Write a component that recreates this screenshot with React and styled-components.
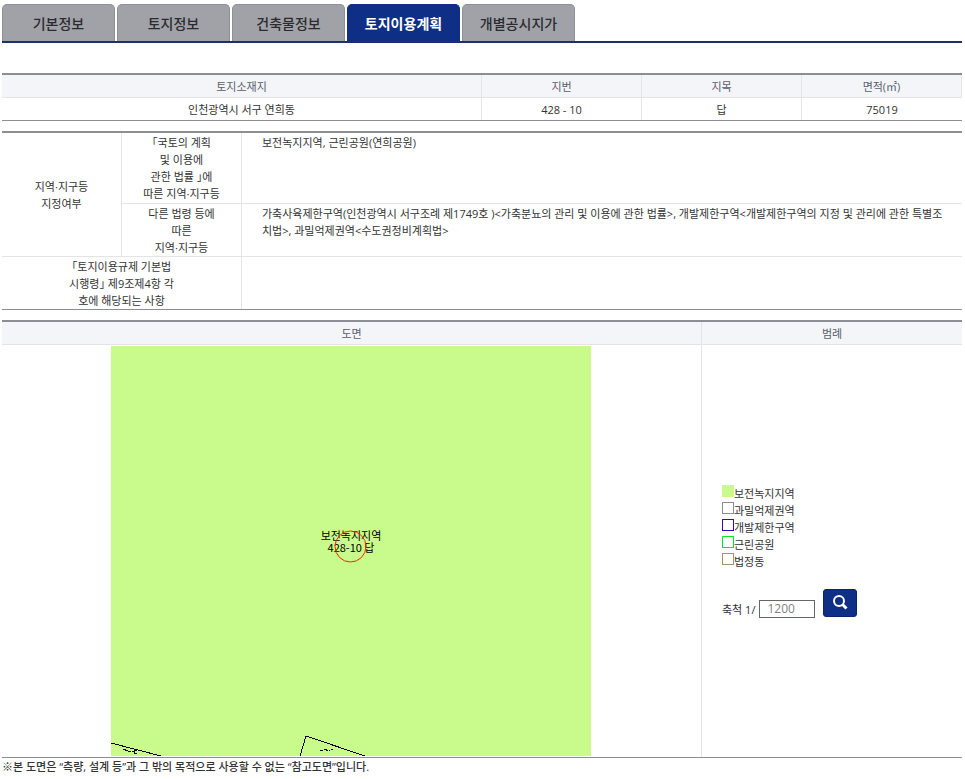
import React, { useState } from "react";
import styled, { createGlobalStyle } from "styled-components";

const Colors = {
  navy: "#0f2e86",
  line: "#1d2f6f",
  tab: "#a0a2a8",
  tabBorder: "#8e9096",
  strong: "#8b8e96",
  light: "#e2e4e8",
  head: "#f3f5f8",
  headText: "#5a5e6e",
  text: "#333333",
  map: "#c8fb8c",
};

const GlobalStyle = createGlobalStyle`
  * {
    box-sizing: border-box;
  }
  body {
    margin: 0;
    background: #ffffff;
    color: ${Colors.text};
    font-family: "Open Sans", "Noto Sans CJK KR", sans-serif;
    font-size: 11px;
    line-height: 17px;
  }
`;

const Page = styled.div`
  padding: 4px 3px 0 2px;
`;

const TabList = styled.nav`
  display: flex;
  gap: 2px;
  margin-bottom: 30px;
  border-bottom: 2px solid ${Colors.line};
`;

const Tab = styled.button`
  width: 113px;
  height: 37px;
  padding: 0;
  border: 1px solid ${(props) => (props.$active ? Colors.navy : Colors.tabBorder)};
  border-bottom: 0;
  border-radius: 5px 5px 0 0;
  background: ${(props) => (props.$active ? Colors.navy : Colors.tab)};
  color: ${(props) => (props.$active ? "#ffffff" : "#2b2b2f")};
  font-family: inherit;
  font-size: 14px;
  font-weight: ${(props) => (props.$active ? 700 : 500)};
  cursor: pointer;
`;

const Table = styled.table`
  width: 100%;
  margin-bottom: ${(props) => (props.$last ? 0 : 10)}px;
  border-top: 2px solid ${Colors.strong};
  border-bottom: 1px solid ${Colors.strong};
  border-collapse: separate;
  border-spacing: 0;
  table-layout: fixed;
`;

const Col = styled.col`
  width: ${(props) => props.$width};
`;

const HeadCell = styled.th`
  height: 23px;
  padding: 0;
  border-right: ${(props) => (props.$open ? 0 : 1)}px solid ${Colors.light};
  border-bottom: 1px solid ${Colors.light};
  background: ${Colors.head};
  color: ${Colors.headText};
  font-weight: 400;
`;

const Cell = styled.td`
  height: 22px;
  padding: 0;
  border-right: 1px solid ${Colors.light};
  text-align: center;

  &:last-child {
    border-right: 0;
  }
`;

const LabelCell = styled.th`
  padding: 0;
  border-right: 1px solid ${Colors.light};
  border-bottom: ${(props) => (props.$end ? 0 : 1)}px solid ${Colors.light};
  font-weight: 400;
  font-feature-settings: "halt";
`;

const TextCell = styled.td`
  height: ${(props) => props.$height}px;
  padding: 1px 12px 0 20px;
  border-bottom: ${(props) => (props.$end ? 0 : 1)}px solid ${Colors.light};
  vertical-align: top;
`;

const MapCell = styled.td`
  padding: 1px 1px 1px 0;
  border-right: 1px solid ${Colors.light};
`;

const MapDrawing = styled.svg`
  display: block;
  margin: 0 auto;
  font-family: "Noto Sans CJK KR", sans-serif;
  font-size: 11px;
`;

const LegendCell = styled.td`
  padding: 0 0 0 20px;
  vertical-align: middle;
`;

const LegendList = styled.ul`
  margin: 0 0 19px;
  padding: 0;
  list-style: none;
`;

const LegendItem = styled.li`
  display: flex;
  align-items: flex-start;
`;

const Swatch = styled.span`
  width: 12px;
  height: 12px;
  border: 1px solid ${(props) => props.$color};
  background: ${(props) => props.$fill || "#ffffff"};
`;

const ScaleForm = styled.form`
  display: flex;
  align-items: flex-end;
`;

const ScaleInput = styled.input`
  width: 56px;
  height: 18px;
  margin: 0 8px 0 4px;
  padding: 0 7px;
  border: 1px solid #666666;
  color: #808080;
  font-family: inherit;
  font-size: 12px;
`;

const SearchButton = styled.button`
  display: flex;
  align-items: center;
  justify-content: center;
  width: 34px;
  height: 28px;
  margin-bottom: 1px;
  padding: 0;
  border: 1px solid #0b2468;
  border-radius: 3px;
  background: ${Colors.navy};
  cursor: pointer;
`;

const Notice = styled.p`
  margin: 0;
  font-weight: 500;
`;

const tabs = ["기본정보", "토지정보", "건축물정보", "토지이용계획", "개별공시지가"];

const legend = [
  { name: "보전녹지지역", color: Colors.map, fill: Colors.map },
  { name: "과밀억제권역", color: "#8c8c8c" },
  { name: "개발제한구역", color: "#4400b8" },
  { name: "근린공원", color: "#00e626" },
  { name: "법정동", color: "#a89070" },
];

const LandMap = () => (
  <MapDrawing width="480" height="410" viewBox="0 0 480 410" role="img" aria-label="도면">
    <rect width="480" height="410" fill={Colors.map} />
    <text textAnchor="middle">
      <tspan x="240" y="194">보전녹지지역</tspan>
      <tspan x="240" y="206">428-10 답</tspan>
    </text>
    <circle cx="239.5" cy="200.5" r="15.5" fill="none" stroke="#ff2200" />
    <g fill="none" stroke="#000000" shapeRendering="crispEdges">
      <path d="M0 397 L50 410" />
      <path d="M189 410 L195 390 L254 410" />
      <path d="M12 403h2v1h3M17 405h3M21 405h2v2h3M23 404h3" />
      <path d="M209 404h3M213 403h2v1h2M218 404h1M220 403h2" />
    </g>
  </MapDrawing>
);

const SearchIcon = () => (
  <svg width="16" height="16" viewBox="0 0 16 16" fill="none" stroke="#ffffff" aria-hidden="true">
    <circle cx="7" cy="6" r="5" strokeWidth="2" />
    <path d="M10.5 9.5 L14.5 13.5" strokeWidth="3" />
  </svg>
);

const App = () => {
  const [active, setActive] = useState("토지이용계획");
  const [scale, setScale] = useState("1200");

  return (
    <>
      <GlobalStyle />
      <Page>
        <TabList>
          {tabs.map((tab) => (
            <Tab key={tab} type="button" $active={tab === active} onClick={() => setActive(tab)}>
              {tab}
            </Tab>
          ))}
        </TabList>

        <Table>
          <colgroup>
            <Col $width="50%" />
            <Col />
            <Col />
            <Col />
          </colgroup>
          <thead>
            <tr>
              <HeadCell>토지소재지</HeadCell>
              <HeadCell>지번</HeadCell>
              <HeadCell>지목</HeadCell>
              <HeadCell>면적(㎡)</HeadCell>
            </tr>
          </thead>
          <tbody>
            <tr>
              <Cell>인천광역시 서구 연희동</Cell>
              <Cell>428 - 10</Cell>
              <Cell>답</Cell>
              <Cell>75019</Cell>
            </tr>
          </tbody>
        </Table>

        <Table>
          <colgroup>
            <Col $width="120px" />
            <Col $width="120px" />
            <Col />
          </colgroup>
          <tbody>
            <tr>
              <LabelCell rowSpan={2}>
                지역·지구등
                <br />
                지정여부
              </LabelCell>
              <LabelCell>
                「국토의 계획
                <br />
                및 이용에
                <br />
                관한 법률 」에
                <br />
                따른 지역·지구등
              </LabelCell>
              <TextCell $height={71}>보전녹지지역, 근린공원(연희공원)</TextCell>
            </tr>
            <tr>
              <LabelCell>
                다른 법령 등에
                <br />
                따른
                <br />
                지역·지구등
              </LabelCell>
              <TextCell $height={53}>
                가축사육제한구역(인천광역시 서구조례 제1749호 )&lt;가축분뇨의 관리 및 이용에 관한
                법률&gt;, 개발제한구역&lt;개발제한구역의 지정 및 관리에 관한 특별조치법&gt;,
                과밀억제권역&lt;수도권정비계획법&gt;
              </TextCell>
            </tr>
            <tr>
              <LabelCell colSpan={2} $end>
                「토지이용규제 기본법
                <br />
                시행령」 제9조제4항 각
                <br />
                호에 해당되는 사항
              </LabelCell>
              <TextCell $height={52} $end />
            </tr>
          </tbody>
        </Table>

        <Table $last>
          <colgroup>
            <Col />
            <Col $width="260px" />
          </colgroup>
          <thead>
            <tr>
              <HeadCell>도면</HeadCell>
              <HeadCell $open>범례</HeadCell>
            </tr>
          </thead>
          <tbody>
            <tr>
              <MapCell>
                <LandMap />
              </MapCell>
              <LegendCell>
                <LegendList>
                  {legend.map((item) => (
                    <LegendItem key={item.name}>
                      <Swatch $color={item.color} $fill={item.fill} />
                      {item.name}
                    </LegendItem>
                  ))}
                </LegendList>
                <ScaleForm onSubmit={(e) => e.preventDefault()}>
                  <label htmlFor="scale">축척 1/</label>
                  <ScaleInput id="scale" value={scale} onChange={(e) => setScale(e.target.value)} />
                  <SearchButton type="submit" aria-label="검색">
                    <SearchIcon />
                  </SearchButton>
                </ScaleForm>
              </LegendCell>
            </tr>
          </tbody>
        </Table>
        <Notice>※본 도면은 “측량, 설계 등”과 그 밖의 목적으로 사용할 수 없는 “참고도면”입니다.</Notice>
      </Page>
    </>
  );
};

export default App;
